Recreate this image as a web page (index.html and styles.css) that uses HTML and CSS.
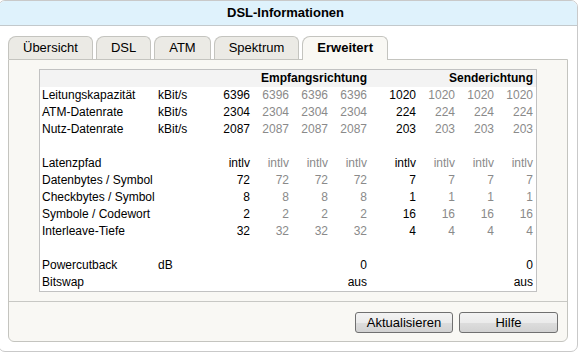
FILE: index.html
```html
<!DOCTYPE html>
<html lang="de">
<head>
  <meta charset="UTF-8">
  <meta name="viewport" content="width=device-width, initial-scale=1.0">
  <title>DSL-Informationen</title>
  <link rel="stylesheet" href="styles.css">
</head>
<body>
  <div class="window">
    <div class="title-bar">DSL-Informationen</div>

    <div class="window-body">
      <div class="tabs">
        <div class="tab">Übersicht</div>
        <div class="tab">DSL</div>
        <div class="tab">ATM</div>
        <div class="tab">Spektrum</div>
        <div class="tab tab-active">Erweitert</div>
      </div>

      <div class="panel">
        <div class="panel-content">
          <div class="info-box">
            <div class="row row-head">
              <span class="head-empf">Empfangsrichtung</span>
              <span class="head-send">Senderichtung</span>
            </div>

            <div class="row">
              <span class="label">Leitungskapazität</span><span class="unit">kBit/s</span>
              <span class="val">6396</span><span class="val dim">6396</span><span class="val dim">6396</span><span class="val dim">6396</span>
              <span class="val">1020</span><span class="val dim">1020</span><span class="val dim">1020</span><span class="val dim">1020</span>
            </div>
            <div class="row">
              <span class="label">ATM-Datenrate</span><span class="unit">kBit/s</span>
              <span class="val">2304</span><span class="val dim">2304</span><span class="val dim">2304</span><span class="val dim">2304</span>
              <span class="val">224</span><span class="val dim">224</span><span class="val dim">224</span><span class="val dim">224</span>
            </div>
            <div class="row">
              <span class="label">Nutz-Datenrate</span><span class="unit">kBit/s</span>
              <span class="val">2087</span><span class="val dim">2087</span><span class="val dim">2087</span><span class="val dim">2087</span>
              <span class="val">203</span><span class="val dim">203</span><span class="val dim">203</span><span class="val dim">203</span>
            </div>

            <div class="row row-blank"></div>

            <div class="row">
              <span class="label">Latenzpfad</span><span class="unit"></span>
              <span class="val">intlv</span><span class="val dim">intlv</span><span class="val dim">intlv</span><span class="val dim">intlv</span>
              <span class="val">intlv</span><span class="val dim">intlv</span><span class="val dim">intlv</span><span class="val dim">intlv</span>
            </div>
            <div class="row">
              <span class="label">Datenbytes / Symbol</span><span class="unit"></span>
              <span class="val">72</span><span class="val dim">72</span><span class="val dim">72</span><span class="val dim">72</span>
              <span class="val">7</span><span class="val dim">7</span><span class="val dim">7</span><span class="val dim">7</span>
            </div>
            <div class="row">
              <span class="label">Checkbytes / Symbol</span><span class="unit"></span>
              <span class="val">8</span><span class="val dim">8</span><span class="val dim">8</span><span class="val dim">8</span>
              <span class="val">1</span><span class="val dim">1</span><span class="val dim">1</span><span class="val dim">1</span>
            </div>
            <div class="row">
              <span class="label">Symbole / Codewort</span><span class="unit"></span>
              <span class="val">2</span><span class="val dim">2</span><span class="val dim">2</span><span class="val dim">2</span>
              <span class="val">16</span><span class="val dim">16</span><span class="val dim">16</span><span class="val dim">16</span>
            </div>
            <div class="row">
              <span class="label">Interleave-Tiefe</span><span class="unit"></span>
              <span class="val">32</span><span class="val dim">32</span><span class="val dim">32</span><span class="val dim">32</span>
              <span class="val">4</span><span class="val dim">4</span><span class="val dim">4</span><span class="val dim">4</span>
            </div>

            <div class="row row-blank"></div>

            <div class="row">
              <span class="label">Powercutback</span><span class="unit">dB</span>
              <span class="val val-empf">0</span>
              <span class="val val-send">0</span>
            </div>
            <div class="row">
              <span class="label">Bitswap</span><span class="unit"></span>
              <span class="val val-empf">aus</span>
              <span class="val val-send">aus</span>
            </div>
          </div>
        </div>

        <div class="panel-footer">
          <button class="btn btn-refresh">Aktualisieren</button>
          <button class="btn btn-help">Hilfe</button>
        </div>
      </div>
    </div>
  </div>
</body>
</html>
```

FILE: styles.css
```css
body {
  margin: 0;
  padding: 0;
  background-color: #ffffff;
  font-family: "Liberation Sans", Arial, sans-serif;
  color: #000000;
}

.window {
  box-sizing: border-box;
  width: 580px;
  margin-left: -2px;
  border: 1px solid #c9c9c9;
  border-radius: 7px;
  background-color: #ffffff;
  overflow: hidden;
}

.title-bar {
  height: 24px;
  line-height: 24px;
  padding-right: 5px;
  background-color: #dff2fc;
  border-bottom: 1px solid #c3c9cc;
  text-align: center;
  font-size: 13px;
  font-weight: bold;
}

.window-body {
  padding: 10px 9px 9px 9px;
}

/* Tabs */
.tabs {
  display: flex;
  align-items: flex-end;
  gap: 3px;
}

.tab {
  box-sizing: border-box;
  height: 23px;
  line-height: 22px;
  padding: 0 14px;
  border: 1px solid #c4c4bf;
  border-bottom: none;
  border-radius: 8px 6px 0 0;
  background-color: #ebeae5;
  font-size: 13px;
}

.tab-active {
  position: relative;
  z-index: 1;
  height: 24px;
  margin-bottom: -1px;
  background-color: #f9f8f4;
  font-weight: bold;
}

/* Panel */
.panel {
  border: 1px solid #c4c4bf;
  border-radius: 0 0 6px 6px;
  background-color: #f9f8f4;
}

.panel-content {
  padding: 9px 30px 9px 30px;
}

.info-box {
  border: 1px solid #c2c2c2;
  background-color: #ffffff;
  font-size: 12px;
}

.row {
  display: grid;
  grid-template-columns: 115px 49px 49px 39px 39px 39px 49px 39px 39px 39px;
  height: 17px;
  line-height: 17px;
  white-space: nowrap;
}

.row span {
  padding: 0 3px;
}

.row .label {
  padding-left: 2px;
}

.row-head {
  background-color: #f3f3f3;
  font-weight: bold;
}

.head-empf {
  grid-column: 3 / 7;
  text-align: right;
}

.head-send {
  grid-column: 7 / 11;
  text-align: right;
}

.val {
  text-align: right;
}

.dim {
  color: #8a8a8a;
}

.val-empf {
  grid-column: 6;
}

.val-send {
  grid-column: 10;
}

/* Footer with buttons */
.panel-footer {
  display: flex;
  justify-content: flex-end;
  gap: 6px;
  padding: 10px 9px 8px 9px;
  border-top: 1px solid #c8c8c4;
}

.btn {
  box-sizing: border-box;
  height: 21px;
  padding: 0;
  border: 1px solid #707070;
  border-radius: 3px;
  background: linear-gradient(#f3f3f3 0%, #ebebeb 50%, #dddddd 51%, #d2d2d2 100%);
  font-family: "Liberation Sans", Arial, sans-serif;
  font-size: 13px;
  color: #000000;
  cursor: pointer;
}

.btn-refresh {
  width: 98px;
}

.btn-help {
  width: 99px;
}
```
